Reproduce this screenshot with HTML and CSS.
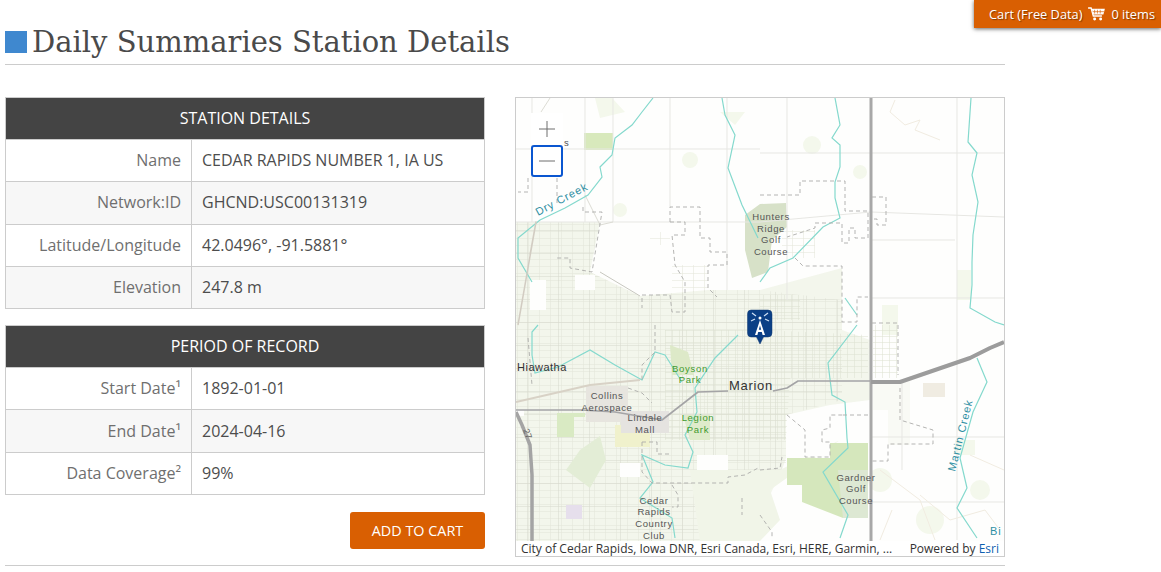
FILE: index.html
```html
<!DOCTYPE html>
<html lang="en">
<head>
    <meta charset="UTF-8">
    <meta name="viewport" content="width=device-width, initial-scale=1.0">
    <title>Daily Summaries Station Details</title>
    <link rel="stylesheet" href="styles.css">
</head>
<body>
    <a class="cart-tab" href="#">
        <span>Cart (Free Data)</span>
        <svg class="cart-icon" viewBox="0 0 18 15" width="17" height="14">
            <path d="M0 1h3.2l2.4 8.6h9.2" fill="none" stroke="#fff" stroke-width="1.5"/>
            <path d="M4 2h14l-1.6 6H5.6z" fill="#fff"/>
            <path d="M7 3v4M10 3v4M13 3v4M5 5h12" stroke="#d95f02" stroke-width=".7"/>
            <circle cx="7" cy="12.8" r="1.6" fill="#fff"/>
            <circle cx="13.4" cy="12.8" r="1.6" fill="#fff"/>
        </svg>
        <span>0 items</span>
    </a>

    <div class="page">
        <h1 class="page-title"><span class="title-mark"></span>Daily Summaries Station Details</h1>

        <div class="columns">
            <div class="details">
                <table class="info-table">
                    <colgroup><col class="label-col"><col></colgroup>
                    <tr><th colspan="2">Station Details</th></tr>
                    <tr><td class="label">Name</td><td>CEDAR RAPIDS NUMBER 1, IA US</td></tr>
                    <tr class="alt"><td class="label">Network:ID</td><td>GHCND:USC00131319</td></tr>
                    <tr><td class="label">Latitude/Longitude</td><td>42.0496°, -91.5881°</td></tr>
                    <tr class="alt"><td class="label">Elevation</td><td>247.8 m</td></tr>
                </table>

                <table class="info-table">
                    <colgroup><col class="label-col"><col></colgroup>
                    <tr><th colspan="2">Period of Record</th></tr>
                    <tr><td class="label">Start Date¹</td><td>1892-01-01</td></tr>
                    <tr class="alt"><td class="label">End Date¹</td><td>2024-04-16</td></tr>
                    <tr><td class="label">Data Coverage²</td><td>99%</td></tr>
                </table>

                <div class="actions">
                    <button class="add-btn" type="button">Add to Cart</button>
                </div>
            </div>

            <div class="map">
                <svg class="map-canvas" viewBox="516 98 488 458" width="488" height="458">
                    <defs>
                        <pattern id="streets" width="11" height="7" patternUnits="userSpaceOnUse">
                            <path d="M0 0H11M0 0V7" stroke="#e2e3d8" stroke-width="1" fill="none"/>
                        </pattern>
                        <pattern id="fineStreets" width="7" height="6" patternUnits="userSpaceOnUse">
                            <path d="M0 0H7M0 0V6" stroke="#dcdfd0" stroke-width="1" fill="none"/>
                        </pattern>
                        <pattern id="wideStreets" width="31" height="23" patternUnits="userSpaceOnUse">
                            <path d="M0 0H31M0 0V23" stroke="#d6d7cb" stroke-width="1" fill="none"/>
                        </pattern>
                    </defs>
                    <rect x="516" y="98" width="488" height="458" fill="#fefefd"/>

                    <!-- pale vegetation -->
                    <g fill="#f4f8ec">
                        <circle cx="812" cy="145" r="9"/><circle cx="860" cy="172" r="7"/>
                        <rect x="957" y="270" width="14" height="30"/><rect x="882" y="305" width="16" height="30"/>
                        <circle cx="880" cy="480" r="12"/><circle cx="930" cy="520" r="14"/>
                        <circle cx="980" cy="490" r="10"/><circle cx="620" cy="210" r="7"/>
                        <rect x="955" y="440" width="20" height="15"/><circle cx="690" cy="160" r="8"/>
                        <path d="M595 98L612 98L625 112L600 118Z"/><path d="M720 112L745 112L735 125Z"/>
                    </g>

                    <!-- town area -->
                    <path d="M516 222H600L590 272L640 296L708 290L760 290L842 268V330L870 340V400L830 405L786 415V458L782 470L760 516V541H516Z" fill="#f3f6ec"/>
                    <path d="M516 222H600L590 272L640 296L708 290L760 290L842 300V400L786 415V470L690 470L700 541H516Z" fill="url(#streets)"/>
                    <path d="M516 222H600L590 272L640 296L708 290L760 290L842 300V400L786 415V470L690 470L700 541H516Z" fill="url(#wideStreets)"/>
                    <path d="M665 330H760L868 335V378H790L786 440H665Z" fill="url(#fineStreets)"/>
                    <path d="M873 325H898V378H873Z" fill="url(#fineStreets)"/>
                    <path d="M760 295H800V320H760Z" fill="url(#fineStreets)"/>
                    <path d="M672 265H708V292H672Z" fill="url(#streets)"/>
                    <path d="M650 232H670V245H650Z" fill="url(#streets)"/>
                    <path d="M782 230H815V258H782Z" fill="url(#streets)"/>
                    <path d="M873 380H910V445H888V410H873Z" fill="#f9faf5"/>
                    <path d="M840 440L780 470L690 470L700 541H760L780 520L770 490Z" fill="#f1f5e8"/>

                    <!-- clearings -->
                    <g fill="#fefefd">
                        <path d="M787 415L805 430V457H787Z"/><rect x="822" y="415" width="46" height="26"/>
                        <rect x="805" y="442" width="25" height="15"/><rect x="530" y="280" width="16" height="30"/>
                        <rect x="516" y="410" width="8" height="6"/><rect x="575" y="275" width="20" height="15"/>
                        <rect x="697" y="455" width="31" height="15"/><rect x="620" y="463" width="20" height="14"/>
                    </g>

                    <!-- parks -->
                    <path d="M787 458H830V443H868V518H843L802 502V485H787Z" fill="#d5e7bc"/>
                    <path d="M838 470H868V518H843Z" fill="#dde8d3"/>
                    <path d="M745 215L760 204L786 203L787 227L772 240L768 272L752 278L745 250Z" fill="#d7e1c8"/>
                    <rect x="584" y="133" width="29" height="17" fill="#d8e9bc"/>
                    <path d="M557 413H585V417H574V437H557Z" fill="#d9eac3"/>
                    <path d="M580 450L600 436L606 460L590 488L566 470Z" fill="#e3edd6"/>
                    <path d="M670 345L688 352L694 375H672Z" fill="#dde9c8"/>
                    <path d="M683 415H710V440H690Z" fill="#dfebcb"/>
                    <rect x="615" y="425" width="35" height="22" fill="#f0f1cc"/>
                    <rect x="566" y="505" width="16" height="14" fill="#e6dfec"/>
                    <rect x="586" y="386" width="42" height="36" fill="#e7e5df"/>
                    <rect x="621" y="411" width="48" height="22" fill="#e5e3e0"/>
                    <rect x="923" y="383" width="22" height="14" fill="#f0ece2"/>

                    <!-- section lines -->
                    <g stroke="#e7e7e3" stroke-width="1" fill="none">
                        <path d="M516 149H760M760 153H1004M516 222H760L871 212L1004 217M871 240H955M871 298H1004M871 437H1004M871 502H1004"/>
                        <path d="M585 98V222M613 98V222M670 98V207M727 98V290M787 98V300M957 98V540"/>
                        <path d="M902 380V470M532 98V222"/>
                    </g>
                    <path d="M550 98L541 112M585 195L600 225L613 222" stroke="#dcdcd4" stroke-width="1" fill="none"/>

                    <!-- hills -->
                    <g stroke="#f1ece1" stroke-width="1" fill="none">
                        <path d="M895 100L890 112L905 125L920 120L915 130L940 140"/>
                        <path d="M920 495L950 520L985 510L1000 530M880 470L920 500L935 540M892 510L880 540M970 455L1004 470"/>
                    </g>

                    <!-- rivers -->
                    <g stroke="#84d9cd" stroke-width="1.2" fill="none">
                        <path d="M653 98L642 112L632 125L615 138L612 155L600 167L602 177L588 195L565 208L540 220L518 238L518 258L532 282"/>
                        <path d="M722 98L725 115L735 135L728 168L742 205L758 238"/>
                        <path d="M835 98L840 125L832 138L840 145L840 167L835 182L835 198L840 218L823 227L793 258L770 268L760 282"/>
                        <path d="M971 98L968 142L977 153L972 175L978 202L973 235L972 262L972 285L970 308L995 322L1004 325"/>
                        <path d="M977 358L987 382L973 412L960 458L967 488L957 508L977 538"/>
                        <path d="M857 325L828 363L832 395L845 402L847 438L848 448L823 472L848 515L840 538"/>
                        <path d="M845 298L857 315"/>
                        <path d="M738 335L715 358L695 388L697 412L685 435L693 452L688 468L665 465L642 455L653 482L640 498L672 518L675 538"/>
                        <path d="M538 325L532 332L532 355L535 373L558 367L590 350L615 365L642 380L655 352L665 355L682 382"/>
                    </g>

                    <!-- roads -->
                    <g fill="none" stroke-linejoin="round">
                        <path d="M871 98V541" stroke="#a8a8a8" stroke-width="3"/>
                        <path d="M871 382H900L970 358L990 348L1004 342" stroke="#9c9c9c" stroke-width="4"/>
                        <path d="M516 410H582L615 412L662 420L698 392L728 391M773 391L787 388L798 381H870" stroke="#a4a4a6" stroke-width="1.6"/>
                        <path d="M516 412L522 425L530 445L532 475L532 541" stroke="#a4a4a4" stroke-width="3.5"/>
                        <path d="M530 255L536 222L518 325" stroke="#d2ccc2" stroke-width="1.5"/>
                        <path d="M516 402L590 385L640 380" stroke="#d8d2c6" stroke-width="2"/>
                        <path d="M600 272L640 296" stroke="#c8c8c0" stroke-width="1"/>
                    </g>

                    <!-- city limits -->
                    <g stroke="#adadaa" stroke-width=".9" stroke-dasharray="4 3" fill="none">
                        <path d="M670 222V207H700V238H710V252H727V265H708V288L717 297"/>
                        <path d="M670 222H685V235H672L675 265L685 282V312H672L670 295H642V308"/>
                        <path d="M583 207V212H602L592 272L570 268V258H557"/>
                        <path d="M557 178V205M528 178V192H518"/>
                        <path d="M760 195H800V181H845V211H868V238H855V228H849V243H842V223H815V228L787 237"/>
                        <path d="M872 197H886V225H877V219H872"/>
                        <path d="M795 258L803 266H842V322H857V297H868M872 323H898V375M900 388V420L933 430V444H888V461H872"/>
                        <path d="M787 415L805 430V457H830V442H822V430L830 428V415H843M843 415H868"/>
                        <path d="M760 470L780 468L782 457M760 515L772 532V538"/>
                        <path d="M642 442H657V454H672M642 442V472L652 483H728V477L745 475L760 467"/>
                        <path d="M672 485L678 495V507H672M742 498V515"/>
                        <path d="M655 325V352L642 365V380M628 388L642 393L652 403M528 338L532 385"/>
                    </g>

                    <!-- labels -->
                    <g class="map-label">
                        <text x="771" y="220" text-anchor="middle">Hunters</text>
                        <text x="771" y="232" text-anchor="middle">Ridge</text>
                        <text x="771" y="243" text-anchor="middle">Golf</text>
                        <text x="771" y="255" text-anchor="middle">Course</text>
                        <text x="607" y="399" text-anchor="middle">Collins</text>
                        <text x="607" y="411" text-anchor="middle">Aerospace</text>
                        <text x="645" y="421" text-anchor="middle">Lindale</text>
                        <text x="645" y="433" text-anchor="middle">Mall</text>
                        <text x="654" y="504" text-anchor="middle">Cedar</text>
                        <text x="654" y="515" text-anchor="middle">Rapids</text>
                        <text x="654" y="527" text-anchor="middle">Country</text>
                        <text x="654" y="539" text-anchor="middle">Club</text>
                        <text x="856" y="481" text-anchor="middle">Gardner</text>
                        <text x="856" y="492" text-anchor="middle">Golf</text>
                        <text x="856" y="504" text-anchor="middle">Course</text>
                    </g>
                    <text class="map-park" x="690" y="372" text-anchor="middle">Boyson</text>
                    <text class="map-park" x="690" y="383" text-anchor="middle">Park</text>
                    <text class="map-park" x="698" y="421" text-anchor="middle">Legion</text>
                    <text class="map-park" x="698" y="433" text-anchor="middle">Park</text>
                    <text class="map-town" x="517" y="371">Hiawatha</text>
                    <text class="map-city" x="751" y="390" text-anchor="middle">Marion</text>
                    <text class="map-water" transform="translate(538 216) rotate(-28)">Dry Creek</text>
                    <text class="map-water" transform="translate(955 472) rotate(-76)">Martin Creek</text>
                    <text class="map-water" x="990" y="535">Bi</text>
                    <text class="map-shield" transform="translate(523 430) rotate(70)">27</text>
                    <text class="map-label" x="564" y="146">s</text>

                    <!-- station marker -->
                    <path d="M751 310H768Q772 310 772 314V333Q772 337 768 337H763.5L760 344L756.5 337H751Q747.5 337 747.5 333V314Q747.5 310 751 310Z" fill="#0b3f86" stroke="#123a6e" stroke-width=".5"/>
                    <path d="M760 320L755 335H757.4L758.2 332H761.8L762.6 335H765ZM760 325.5L761.2 329.8H758.8Z" fill="#fff"/>
                    <circle cx="760" cy="318" r="1.5" fill="#fff"/>
                    <path d="M752 313L756 316M768 313L764 316M751 321L755 319M769 321L765 319" stroke="#cfe0f5" stroke-width="1.2"/>
                </svg>

                <div class="zoom-ctrl">
                    <button class="zoom-btn" type="button" aria-label="Zoom in">
                        <svg viewBox="0 0 16 16" width="16" height="16"><path d="M8 0V16M0 8H16" stroke="#6e6e6e" stroke-width="1"/></svg>
                    </button>
                    <button class="zoom-btn focused" type="button" aria-label="Zoom out">
                        <svg viewBox="0 0 16 16" width="16" height="16"><path d="M0 8H16" stroke="#6e6e6e" stroke-width="1"/></svg>
                    </button>
                </div>

                <div class="attribution">
                    <span class="attr-text">City of Cedar Rapids, Iowa DNR, Esri Canada, Esri, HERE, Garmin, ...</span>
                    <span>Powered by <a href="#">Esri</a></span>
                </div>
            </div>
        </div>

        <hr class="bottom-rule">
    </div>
</body>
</html>
```

FILE: styles.css
```css
* { box-sizing: border-box; }
html, body { height: 100%; }
body {
    margin: 0;
    font-family: "Open Sans", sans-serif;
    font-size: 16px;
    color: #444;
    background: #fff;
    overflow: hidden;
}
.page {
    width: 1000px;
    margin-left: 5px;
    padding-top: 19px;
}
.page-title {
    display: flex;
    align-items: center;
    height: 46px;
    margin: 0 0 32px;
    border-bottom: 1px solid #ccc;
    font-family: "DejaVu Serif", serif;
    font-size: 29px;
    font-weight: 400;
    color: #4a4a4a;
    white-space: nowrap;
}
.title-mark {
    width: 22px;
    height: 22px;
    margin-right: 5px;
    background: #3f88cf;
}
.columns {
    display: flex;
    justify-content: space-between;
}
.details { width: 480px; }
.info-table {
    width: 480px;
    margin-bottom: 16px;
    border-collapse: collapse;
    table-layout: fixed;
}
.label-col { width: 186px; }
.info-table th {
    height: 42px;
    padding: 0 0 1px;
    border: 1px solid #ccc;
    background: #444;
    color: #fff;
    font-weight: 400;
    font-size: 16px;
    text-transform: uppercase;
}
.info-table td {
    height: 42.3px;
    padding: 0 10px 1px;
    border: 1px solid #ccc;
    color: #4d4d4d;
    white-space: nowrap;
}
.info-table .label {
    text-align: right;
    color: #6f6f6f;
}
.info-table .alt td { background: #f7f7f7; }
.actions {
    display: flex;
    justify-content: flex-end;
    padding-top: 1px;
}
.add-btn {
    width: 135px;
    height: 37px;
    border: none;
    border-radius: 3px;
    background: #d95f02;
    color: #fff;
    font-family: inherit;
    font-size: 14.4px;
    text-transform: uppercase;
}
.map {
    position: relative;
    width: 490px;
    height: 460px;
    border: 1px solid #ccc;
    overflow: hidden;
}
.map-canvas { display: block; }
.map-label {
    font-family: "Liberation Sans", sans-serif;
    font-size: 9.5px;
    letter-spacing: .6px;
    fill: #555;
}
.map-park {
    font-family: "Liberation Sans", sans-serif;
    font-size: 9.5px;
    letter-spacing: .7px;
    fill: #3f9a2e;
}
.map-town {
    font-family: "Liberation Sans", sans-serif;
    font-size: 11px;
    letter-spacing: .5px;
    fill: #333;
}
.map-city {
    font-family: "Liberation Sans", sans-serif;
    font-size: 13px;
    letter-spacing: .7px;
    fill: #333;
}
.map-water {
    font-family: "Liberation Sans", sans-serif;
    font-size: 11px;
    letter-spacing: .9px;
    fill: #2f8fa3;
}
.map-shield {
    font-family: "Liberation Sans", sans-serif;
    font-size: 9px;
    fill: #666;
}
.zoom-ctrl {
    position: absolute;
    left: 15px;
    top: 15px;
    display: flex;
    flex-direction: column;
}
.zoom-btn {
    display: flex;
    align-items: center;
    justify-content: center;
    width: 32px;
    height: 32px;
    padding: 0;
    border: none;
    background: #fff;
}
.zoom-btn.focused {
    border: 2px solid #0a56d0;
    border-radius: 3px;
}
.attribution {
    position: absolute;
    left: 0;
    right: 0;
    bottom: 0;
    display: flex;
    justify-content: space-between;
    height: 15px;
    padding: 0 5px;
    background: rgba(255, 255, 255, .8);
    font-size: 12px;
    line-height: 15px;
    color: #323232;
    white-space: nowrap;
}
.attribution a {
    color: #0f5fb0;
    text-decoration: none;
}
.bottom-rule {
    height: 1px;
    margin: 8px 0 0;
    border: none;
    background: #ccc;
}
.cart-tab {
    position: absolute;
    top: 0;
    right: 0;
    display: flex;
    align-items: center;
    gap: 6px;
    width: 187px;
    height: 28px;
    padding-left: 15px;
    background: #d95f02;
    box-shadow: 0 1px 4px rgba(0, 0, 0, .6);
    color: #fff;
    font-size: 12.8px;
    text-decoration: none;
    text-shadow: 1px 1px 1px rgba(0, 0, 0, .4);
    white-space: nowrap;
}
```
